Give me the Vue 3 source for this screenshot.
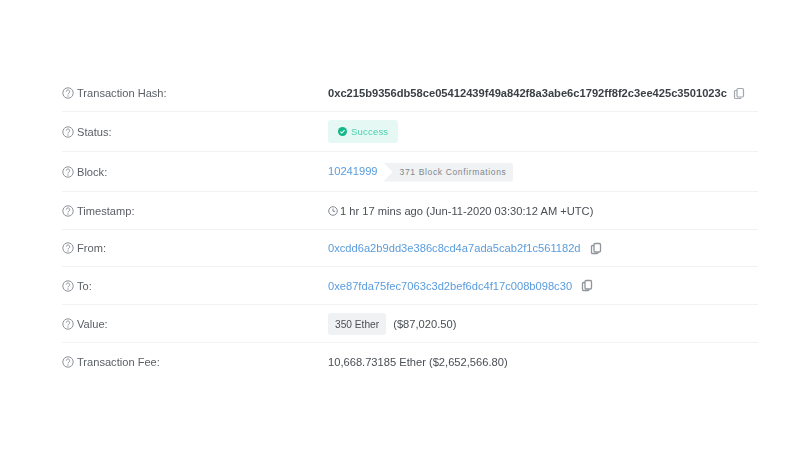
<script setup>
const rows = [
  { label: 'Transaction Hash:', kind: 'hash', h: 37 },
  { label: 'Status:', kind: 'status', h: 40 },
  { label: 'Block:', kind: 'block', h: 40 },
  { label: 'Timestamp:', kind: 'time', h: 38 },
  { label: 'From:', kind: 'from', h: 37 },
  { label: 'To:', kind: 'to', h: 38 },
  { label: 'Value:', kind: 'value', h: 38 },
  { label: 'Transaction Fee:', kind: 'fee', h: 38 },
]
</script>

<template>
  <div class="page">
    <div class="list">
      <div v-for="row in rows" :key="row.label" class="row" :style="{ height: row.h + 'px' }">
        <div class="label">
          <svg class="help" viewBox="0 0 12 12" width="12" height="12">
            <circle cx="6" cy="6" r="5.200" fill="none" stroke="#8d9299" stroke-width="1" />
            <path d="M4.300 4.700a1.700 1.700 0 1 1 2.700 1.300c-.7.500-1 .8-1 1.400" fill="none" stroke="#8d9299" stroke-width="1" />
            <circle cx="6" cy="9" r=".65" fill="#8d9299" />
          </svg>
          <span>{{ row.label }}</span>
        </div>
        <div class="value">
          <template v-if="row.kind === 'hash'">
            <span class="hash">0xc215b9356db58ce05412439f49a842f8a3abe6c1792ff8f2c3ee425c3501023c</span>
            <svg class="copy copy-hash" viewBox="0 0 12 12" width="12" height="13">
              <rect x="4" y="1" width="6.500" height="8.500" rx="1.200" fill="#fff" stroke="#a2a7ad" stroke-width="1.200" />
              <path d="M4 3H2.600a1.100 1.100 0 0 0-1.100 1.100v5.800A1.100 1.100 0 0 0 2.600 11h4.200A1.100 1.100 0 0 0 8 9.900" fill="none" stroke="#a2a7ad" stroke-width="1.200" />
            </svg>
          </template>
          <template v-else-if="row.kind === 'status'">
            <span class="success">
              <svg viewBox="0 0 10 10" width="9" height="9">
                <circle cx="5" cy="5" r="5" fill="#12b886" />
                <path d="M2.700 5.100l1.600 1.600 3-3.200" fill="none" stroke="#fff" stroke-width="1.300" />
              </svg>
              Success
            </span>
          </template>
          <template v-else-if="row.kind === 'block'">
            <a class="link block-link">10241999</a>
            <span class="confirm">371 Block Confirmations</span>
          </template>
          <template v-else-if="row.kind === 'time'">
            <svg class="clock" viewBox="0 0 10 10" width="10" height="10">
              <circle cx="5" cy="5" r="4.300" fill="none" stroke="#83888e" stroke-width="1" />
              <path d="M5 2.500V5.300H7.200" fill="none" stroke="#83888e" stroke-width="1" />
            </svg>
            <span>1 hr 17 mins ago (Jun-11-2020 03:30:12 AM +UTC)</span>
          </template>
          <template v-else-if="row.kind === 'from'">
            <a class="link">0xcdd6a2b9dd3e386c8cd4a7ada5cab2f1c561182d</a>
            <svg class="copy" viewBox="0 0 12 12" width="12" height="13">
              <rect x="4" y="1" width="6.500" height="8.500" rx="1.200" fill="#fff" stroke="#8f959b" stroke-width="1.300" />
              <path d="M4 3H2.600a1.100 1.100 0 0 0-1.100 1.100v5.800A1.100 1.100 0 0 0 2.600 11h4.200A1.100 1.100 0 0 0 8 9.900" fill="none" stroke="#8f959b" stroke-width="1.300" />
            </svg>
          </template>
          <template v-else-if="row.kind === 'to'">
            <a class="link">0xe87fda75fec7063c3d2bef6dc4f17c008b098c30</a>
            <svg class="copy" viewBox="0 0 12 12" width="12" height="13">
              <rect x="4" y="1" width="6.500" height="8.500" rx="1.200" fill="#fff" stroke="#8f959b" stroke-width="1.300" />
              <path d="M4 3H2.600a1.100 1.100 0 0 0-1.100 1.100v5.800A1.100 1.100 0 0 0 2.600 11h4.200A1.100 1.100 0 0 0 8 9.900" fill="none" stroke="#8f959b" stroke-width="1.300" />
            </svg>
          </template>
          <template v-else-if="row.kind === 'value'">
            <span class="ether">350 Ether</span>
            <span class="usd">($87,020.50)</span>
          </template>
          <template v-else>
            <span>10,668.73185 Ether ($2,652,566.80)</span>
          </template>
        </div>
      </div>
    </div>
  </div>
</template>

<style>
html, body { margin: 0; background: #fff; }
</style>

<style scoped>
.page {
  width: 810px;
  height: 450px;
  box-sizing: border-box;
  padding: 75px 52px 0 62px;
  background: #fff;
  font-family: "Liberation Sans", Arial, sans-serif;
  font-size: 11.150px;
  color: #4a4f55;
  overflow: hidden;
}
.list { display: flex; flex-direction: column; filter: blur(0.4px); }
.row {
  display: flex;
  align-items: center;
  box-sizing: border-box;
  border-bottom: 1px solid #f0f2f5;
}
.row:last-child { border-bottom: 0; }
.label {
  width: 266px;
  flex: none;
  display: flex;
  align-items: center;
  gap: 3px;
  color: #5b6066;
  font-size: 11.100px;
}
.help { flex: none; }
.value { display: flex; align-items: center; color: #4a4f55; }
.hash { font-weight: 700; color: #3a3f45; }
.copy { margin-left: 9px; }
.copy-hash { margin-left: 6px; }
.link { color: #5a9cdc; }
.block-link { margin-bottom: 2px; }
.success {
  display: inline-flex;
  align-items: center;
  gap: 4px;
  height: 23px;
  padding: 0 10px;
  border-radius: 3px;
  background: #e6f8f4;
  color: #4ccfaa;
  font-size: 9.500px;
  letter-spacing: 0.2px;
}
.confirm {
  display: inline-flex;
  align-items: center;
  height: 19px;
  margin-left: 6px;
  margin-top: 1px;
  padding: 0 7px 0 16px;
  background: #f0f2f4;
  border-radius: 0 3px 3px 0;
  clip-path: polygon(0 0, 100% 0, 100% 100%, 0 100%, 9px 50%);
  color: #80868d;
  font-size: 8.500px;
  letter-spacing: 0.64px;
}
.clock { margin-right: 2px; }
.ether {
  display: inline-flex;
  align-items: center;
  box-sizing: border-box;
  height: 22px;
  padding: 1px 7px 0;
  background: #eff1f3;
  border-radius: 3px;
  font-size: 10.200px;
}
.usd { margin-left: 7px; }
</style>
